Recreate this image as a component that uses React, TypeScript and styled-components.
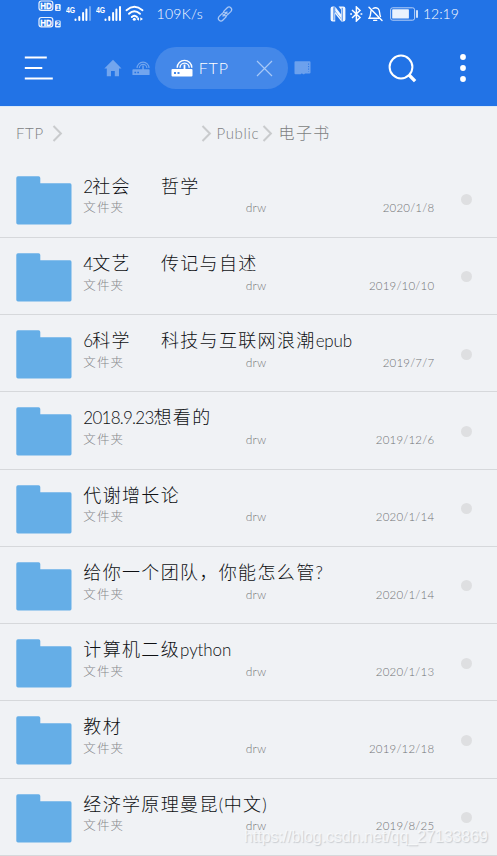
import React from "react";
import styled, { createGlobalStyle } from "styled-components";

const GlobalStyle = createGlobalStyle`
  * { box-sizing: border-box; }
  body { margin: 0; background: #f0f2f5; }
`;

const latin = `Lato, "Noto Sans CJK SC", sans-serif`;

const Screen = styled.div`
  position: relative;
  width: 497px;
  height: 856px;
  overflow: hidden;
  background: #f0f2f5;
  font-family: ${latin};
`;

const Header = styled.header`
  height: 106px;
  background: #2273e6;
  color: #fff;
`;

const StatusBar = styled.div`
  display: flex;
  align-items: center;
  height: 28px;
  padding-left: 38px;
  svg { display: block; flex: none; }
`;

const StatusText = styled.span<{ $left: number; $width: number; $spacing: number }>`
  margin-left: ${(p) => p.$left}px;
  width: ${(p) => p.$width}px;
  font-size: 14px;
  font-weight: 300;
  line-height: 28px;
  letter-spacing: ${(p) => p.$spacing}px;
  white-space: nowrap;
  color: #fff;
`;

const Spaced = styled.span<{ $left: number }>`
  display: block;
  flex: none;
  margin-left: ${(p) => p.$left}px;
`;

const Toolbar = styled.div`
  display: flex;
  align-items: center;
  height: 80px;
  padding-left: 24px;
  svg { display: block; flex: none; }
`;

const Tab = styled.div`
  display: flex;
  align-items: center;
  flex: none;
  width: 133.5px;
  height: 42px;
  margin-left: 4.7px;
  padding-left: 16px;
  border-radius: 21px;
  background: #4488e9;
`;

const TabLabel = styled.span`
  width: 50px;
  margin-left: 6px;
  font-size: 16px;
  font-weight: 300;
  line-height: 20px;
  letter-spacing: 0.9px;
`;

const Breadcrumb = styled.nav`
  display: flex;
  align-items: center;
  height: 54.5px;
  padding-left: 16px;
  border-top: 1px solid #dceaf8;
  color: #7d7f82;
  svg { display: block; flex: none; }
`;

const Crumb = styled.span<{ $width: number; $cjk?: boolean }>`
  display: block;
  width: ${(p) => p.$width}px;
  margin-top: -1px;
  font-size: ${(p) => (p.$cjk ? 16 : 15)}px;
  font-weight: 300;
  line-height: 20px;
  letter-spacing: ${(p) => (p.$cjk ? 1.4 : 0.65)}px;
  white-space: nowrap;
`;

const Row = styled.div`
  display: flex;
  height: 77.25px;
  padding: 15px 25px 0 16.3px;
  border-bottom: 1px solid #d6d8db;
  svg { display: block; flex: none; }
`;

const Info = styled.div`
  display: flex;
  flex-direction: column;
  width: 351px;
  margin-left: 11px;
  margin-top: -2px;
`;

const Title = styled.div`
  display: flex;
  align-items: baseline;
  height: 23px;
  line-height: 23px;
  color: #0e1013;
  white-space: pre;
`;

const Cjk = styled.span<{ $gap?: number }>`
  margin-left: ${(p) => p.$gap ?? 0}px;
  font-family: "Noto Sans CJK SC", sans-serif;
  font-size: 18px;
  font-weight: 300;
  letter-spacing: 1.35px;
`;

const Latin = styled.span<{ $spacing: number }>`
  font-size: 17px;
  font-weight: 300;
  letter-spacing: ${(p) => p.$spacing}px;
`;

const Meta = styled.div`
  display: flex;
  align-items: baseline;
  height: 20px;
  margin-top: 0.8px;
  line-height: 20px;
  font-size: 12px;
  font-weight: 300;
  color: #717376;
`;

const Kind = styled.span`
  width: 162.5px;
  font-family: "Noto Sans CJK SC", sans-serif;
  font-size: 12.5px;
  letter-spacing: 1.1px;
  color: #85878a;
`;

const Perm = styled.span`
  letter-spacing: 0.2px;
`;

const DateText = styled.span`
  margin-left: auto;
  font-size: 11.5px;
  letter-spacing: 0.2px;
`;

const Dot = styled.i`
  width: 11px;
  height: 11px;
  margin: 18.7px 0 0 auto;
  border-radius: 50%;
  background: #dedfe1;
`;

const Watermark = styled.div`
  position: absolute;
  left: 244px;
  top: 827px;
  font: 16px/20px "Liberation Sans", Arial, sans-serif;
  letter-spacing: -0.05px;
  color: rgba(250, 251, 252, 0.8);
  text-shadow: 1px 1px 1px rgba(90, 95, 105, 0.26);
  white-space: nowrap;
`;

type Segment = { text: string; latin?: number; gap?: number };
type Item = { title: Segment[]; date: string };

const items: Item[] = [
  { title: [{ text: "2", latin: -1 }, { text: "社会" }, { text: "哲学", gap: 30 }], date: "2020/1/8" },
  { title: [{ text: "4", latin: -1 }, { text: "文艺" }, { text: "传记与自述", gap: 30 }], date: "2019/10/10" },
  { title: [{ text: "6", latin: -1 }, { text: "科学" }, { text: "科技与互联网浪潮", gap: 30 }, { text: "epub", latin: -0.2 }], date: "2019/7/7" },
  { title: [{ text: "2018.9.23", latin: -0.75 }, { text: "想看的" }], date: "2019/12/6" },
  { title: [{ text: "代谢增长论" }], date: "2020/1/14" },
  { title: [{ text: "给你一个团队，你能怎么管" }, { text: "?", latin: 0 }], date: "2020/1/14" },
  { title: [{ text: "计算机二级" }, { text: "python", latin: -0.1 }], date: "2020/1/13" },
  { title: [{ text: "教材" }], date: "2019/12/18" },
  { title: [{ text: "经济学原理曼昆" }, { text: "(", latin: 0.5 }, { text: "中文" }, { text: ")", latin: 0 }], date: "2019/8/25" },
];

const HdBadges = () => (
  <svg width="24" height="28" viewBox="0 0 24 28" fontFamily="Liberation Sans, sans-serif" fontWeight="bold">
    {[1, 2].map((n, i) => (
      <g key={n} transform={`translate(0 ${i * 16.5})`}>
        <rect x="1" y="1" width="13.8" height="9.4" rx="2.4" fill="none" stroke="#eaf2fd" strokeWidth="1.2" />
        <text x="2.2" y="9" fontSize="9.3" textLength="11.5" lengthAdjust="spacingAndGlyphs" fill="#fff" stroke="#fff" strokeWidth=".3">HD</text>
        <rect x="17" y="4" width="5.7" height="7" rx="1.3" fill="#e6f0fd" />
        <text x="18" y="9.9" fontSize="6.8" fill="#2273e6">{n}</text>
      </g>
    ))}
  </svg>
);

const Signal = ({ weak }: { weak?: boolean }) => (
  <svg width="26" height="28" viewBox="0 0 26 28">
    <text x="0" y="13" fontFamily="Liberation Sans, sans-serif" fontWeight="bold" fontSize="9.6" textLength="9.2" lengthAdjust="spacingAndGlyphs" fill="#fff">4G</text>
    <g stroke="#fff" strokeWidth="2" strokeLinecap="round">
      <path d="M9.5 19.5v.5M13.3 17v3M17.1 13v7M20.4 9.5V20" />
      <path d="M24 7v13" opacity={weak ? 0.35 : 1} />
    </g>
  </svg>
);

const Wifi = () => (
  <svg width="20" height="28" viewBox="0 0 20 28" fill="none" stroke="#fff" strokeWidth="1.9" strokeLinecap="round">
    <path d="M1.5 10.2Q9.3 3.4 17.5 10.2M4 13.8Q9.3 8.8 15 13.8M6.8 17Q9.3 14.5 12 17" />
    <circle cx="9.3" cy="19.3" r="1.5" fill="#fff" stroke="none" />
    <path d="M14 17.2v3.6l-2.6-1.8ZM15.3 17.2v3.6l2.7-1.8Z" fill="#fff" stroke="none" />
  </svg>
);

const LinkIcon = () => (
  <svg width="16" height="16" viewBox="0 0 24 24" fill="none" stroke="#a8c7f5" strokeWidth="1.9" strokeLinecap="round">
    <path d="m10 8 5-5c4-4 9 1 6 5l-5 5c-2 2-5 2-7 0M14 16l-5 5c-4 4-9-1-6-5l5-5c2-2 5-2 7 0" />
    <path d="m9 15 6-6" />
  </svg>
);

const Nfc = () => (
  <svg width="16" height="16" viewBox="0 0 16 16">
    <path d="M4.6.4H2.6Q.6.4.6 2.4V13.6Q.6 15.6 2.6 15.6H5.2V5.5L11 12.7V3.4L8.6.4H13.4Q15.4.4 15.4 2.4V13.6Q15.4 15.6 13.4 15.6H11.4L4.6 7Z" fill="#f2f7fe" />
    <path d="M3.9 1.3v13M12.2 1.8v13" stroke="#2273e6" strokeWidth=".9" />
    <path d="M5.2.8 11.2 8.4V12.6L5.2 5Z" fill="#f2f7fe" />
  </svg>
);

const Bluetooth = () => (
  <svg width="13" height="16" viewBox="0 0 13 16" fill="none" stroke="#fff" strokeWidth="1.5">
    <path d="m2 4 8 7.5L6.4 15V1L10 4.5 2 12" />
    <path d="M.2 8h1.8M10.5 8h1.8" strokeWidth="1.7" />
  </svg>
);

const BellOff = () => (
  <svg width="15" height="16" viewBox="0 0 15 16" fill="none" stroke="#fff" strokeWidth="1.4" strokeLinecap="round">
    <path d="M1 1.3 14 14.5M5 2.5q2.5-1.5 5 0c2.5 2 1 5.5 2.5 8M3 4.7c-.6 3 0 4.5-1.8 7.5h9.6M5.7 14.4h3" />
  </svg>
);

const Battery = () => (
  <svg width="29" height="14" viewBox="0 0 29 14">
    <rect x=".6" y=".8" width="24" height="12.4" rx="2" fill="none" stroke="#b7d0f7" strokeWidth="1" />
    <rect x="2.2" y="2.3" width="16.7" height="9.3" rx=".7" fill="#eaf2fd" />
    <path d="M27 3.3v7.4" stroke="#e1ecfc" strokeWidth="1.8" />
  </svg>
);

const MenuIcon = () => (
  <svg width="29" height="26" viewBox="0 0 29 26" stroke="#fff" strokeWidth="2.2">
    <path d="M.8 2.5h22M.8 13h17.5M.8 23.5h28" />
  </svg>
);

const Home = () => (
  <svg width="18" height="18" viewBox="0 0 18 18" fill="#72a5ee">
    <path d="M9 .8 17.5 9.4H15V17.2H10.8V12H7v5.2H2.8V9.4H.3Z" />
  </svg>
);

const Router = ({ color, hole, size }: { color: string; hole: string; size: number }) => (
  <svg width={size} height={(size * 18) / 22} viewBox="0 0 22 18">
    <path d="M1.5 10h19q1 0 1 1v5.5q0 1-1 1h-19q-1 0-1-1V11q0-1 1-1Z" fill={color} />
    <path d="M13.5 5.5V11" stroke={color} strokeWidth="1.8" />
    <path d="M6.2 8.7a7.3 7.3 0 0 1 14.6 0M9 8.7a4.6 4.6 0 0 1 9.2 0" fill="none" stroke={color} strokeWidth="1.4" />
    <path d="M3 13h2v2H3ZM6.5 13h2v2h-2Z" fill={hole} />
  </svg>
);

const Close = () => (
  <svg width="17" height="17" viewBox="0 0 17 17" stroke="#a7c8f6" strokeWidth="1.2">
    <path d="m1 1 15 15M16 1 1 16" />
  </svg>
);

const SdCard = () => (
  <svg width="17" height="14" viewBox="0 0 17 14">
    <path d="M1.5.3h14q1 0 1 1V11.5q0 1-1 1H11l-.8.8H9l-.8-.8H7.4l-.7.8H1.5q-1 0-1-1V1.3q0-1 1-1Z" fill="#6ca1ed" />
    <path d="M14.6 2.5v8" stroke="#2273e6" strokeWidth=".9" strokeDasharray="1.2 1.3" />
  </svg>
);

const SearchIcon = () => (
  <svg width="29" height="29" viewBox="0 0 29 29" fill="none" stroke="#fff">
    <circle cx="13" cy="13" r="11.4" strokeWidth="2" />
    <path d="m20.8 20.8 6.3 6.3" strokeWidth="3.4" />
  </svg>
);

const More = () => (
  <svg width="6" height="28" viewBox="0 0 6 28" fill="#fff">
    <circle cx="3" cy="3" r="2.9" /><circle cx="3" cy="14" r="2.9" /><circle cx="3" cy="25" r="2.9" />
  </svg>
);

const Chevron = () => (
  <svg width="11" height="17" viewBox="0 0 11 17" fill="none" stroke="#c9cbcd" strokeWidth="2">
    <path d="m1.5 1 7.4 7.5L1.5 16" />
  </svg>
);

const Folder = () => (
  <svg width="56" height="49" viewBox="0 0 56 49">
    <path d="M2 .3H22.5Q24.3.3 24.3 2V7.2H54Q55.5 7.2 55.5 9V46.7Q55.5 48.4 54 48.4H2Q.3 48.4.3 46.7V2Q.3.3 2 .3Z" fill="#65aee7" />
  </svg>
);

const TitleSegment = ({ text, latin: spacing, gap }: Segment) =>
  spacing === undefined ? <Cjk $gap={gap}>{text}</Cjk> : <Latin $spacing={spacing}>{text}</Latin>;

export default function App() {
  return (
    <Screen>
      <GlobalStyle />
      <Header>
        <StatusBar>
          <HdBadges />
          <Spaced $left={3.5}><Signal weak /></Spaced>
          <Spaced $left={4}><Signal /></Spaced>
          <Spaced $left={3}><Wifi /></Spaced>
          <StatusText $left={12} $width={49} $spacing={0.3}>109K/s</StatusText>
          <Spaced $left={11.5}><LinkIcon /></Spaced>
          <Spaced $left={97}><Nfc /></Spaced>
          <Spaced $left={4}><Bluetooth /></Spaced>
          <Spaced $left={4.5}><BellOff /></Spaced>
          <Spaced $left={7.5}><Battery /></Spaced>
          <StatusText $left={4} $width={40} $spacing={0}>12:19</StatusText>
        </StatusBar>
        <Toolbar>
          <MenuIcon />
          <Spaced $left={51}><Home /></Spaced>
          <Spaced $left={10}><Router color="#72a5ee" hole="#2273e6" size={18} /></Spaced>
          <Tab>
            <Router color="#fff" hole="#4488e9" size={22} />
            <TabLabel>FTP</TabLabel>
            <Spaced $left={7}><Close /></Spaced>
          </Tab>
          <Spaced $left={6}><SdCard /></Spaced>
          <Spaced $left={77}><SearchIcon /></Spaced>
          <Spaced $left={43}><More /></Spaced>
        </Toolbar>
      </Header>
      <Breadcrumb>
        <Crumb $width={36}>FTP</Crumb>
        <Chevron />
        <Spaced $left={138}><Chevron /></Spaced>
        <Spaced $left={4.5}><Crumb $width={42}>Public</Crumb></Spaced>
        <Spaced $left={3.5}><Chevron /></Spaced>
        <Spaced $left={5.5}><Crumb $width={60} $cjk>电子书</Crumb></Spaced>
      </Breadcrumb>
      <main>
        {items.map((item, i) => (
          <Row key={i}>
            <Folder />
            <Info>
              <Title>{item.title.map((s, j) => <TitleSegment key={j} {...s} />)}</Title>
              <Meta>
                <Kind>文件夹</Kind>
                <Perm>drw</Perm>
                <DateText>{item.date}</DateText>
              </Meta>
            </Info>
            <Dot />
          </Row>
        ))}
      </main>
      <Watermark>https://blog.csdn.net/qq_27133869</Watermark>
    </Screen>
  );
}
